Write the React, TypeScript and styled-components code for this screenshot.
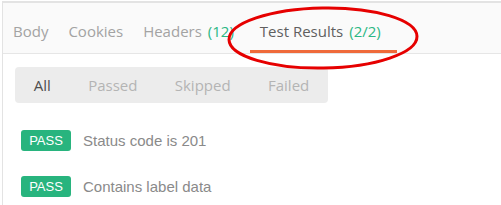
import React, { FunctionComponent } from 'react'
import styled, { createGlobalStyle } from 'styled-components'

const GlobalStyle = createGlobalStyle`
  html, body {
    margin: 0;
    padding: 0;
    background: #ffffff;
  }
  body {
    font-family: 'Open Sans', 'Liberation Sans', sans-serif;
    overflow: hidden;
  }
`

const Page = styled.div`
  position: relative;
  width: 501px;
  height: 205px;
  padding-top: 1px;
  padding-left: 2px;
  box-sizing: border-box;
`

const Panel = styled.div`
  border-top: 2px solid #e3e3e3;
  border-left: 1px solid #e3e3e3;
  height: 100%;
  box-sizing: border-box;
`

const TabBar = styled.div`
  display: flex;
  align-items: flex-end;
  height: 50px;
  background: #fafafa;
  border-bottom: 1px solid #e6e6e6;
`

const Tab = styled.div<{ $active?: boolean }>`
  display: flex;
  align-items: baseline;
  padding: 0 10px 9px;
  font-size: 15px;
  line-height: 20px;
  color: ${(p) => (p.$active ? '#5f5f5f' : '#a3a3a3')};
  border-bottom: 3px solid ${(p) => (p.$active ? '#ef6a3a' : 'transparent')};
`

const Count = styled.span`
  margin-left: 6px;
  padding-right: 6px;
  color: #2cb784;
`

const Body = styled.div`
  padding: 13px 0 0 12px;
`

const Filter = styled.div`
  display: inline-flex;
  height: 36px;
  background: #ececec;
  border-radius: 4px;
`

const FilterItem = styled.div<{ $active?: boolean }>`
  display: flex;
  align-items: center;
  padding: 0 18.7px;
  font-size: 15px;
  color: ${(p) => (p.$active ? '#4f4f4f' : '#b4b4b4')};
`

const Results = styled.div`
  margin-top: 14px;
  padding-left: 6px;
`

const Row = styled.div`
  display: flex;
  align-items: center;
  height: 46px;
`

const Badge = styled.span`
  display: inline-flex;
  align-items: center;
  justify-content: center;
  width: 50px;
  height: 21px;
  border-radius: 3px;
  background: #28b47e;
  color: #ffffff;
  font-family: 'Liberation Sans', Arial, sans-serif;
  font-size: 13px;
`

const ResultName = styled.span`
  margin-left: 12px;
  font-family: 'Liberation Sans', Arial, sans-serif;
  font-size: 15px;
  color: #8a8a8a;
`

const Annotation = styled.svg`
  position: absolute;
  left: 0;
  top: 0;
  pointer-events: none;
`

const tabs = [
  { label: 'Body' },
  { label: 'Cookies' },
  { label: 'Headers', count: '(12)' },
  { label: 'Test Results', count: '(2/2)', active: true },
]

const filters = ['All', 'Passed', 'Skipped', 'Failed']

const results = ['Status code is 201', 'Contains label data']

const App: FunctionComponent = () => {
  return (
    <Page>
      <GlobalStyle />
      <Panel>
        <TabBar>
          {tabs.map((t) => (
            <Tab key={t.label} $active={t.active}>
              {t.label}
              {t.count && <Count>{t.count}</Count>}
            </Tab>
          ))}
        </TabBar>
        <Body>
          <Filter>
            {filters.map((f, i) => (
              <FilterItem key={f} $active={i === 0}>
                {f}
              </FilterItem>
            ))}
          </Filter>
          <Results>
            {results.map((r) => (
              <Row key={r}>
                <Badge>PASS</Badge>
                <ResultName>{r}</ResultName>
              </Row>
            ))}
          </Results>
        </Body>
      </Panel>
      <Annotation width="501" height="205" viewBox="0 0 501 205">
        <ellipse
          cx="323"
          cy="38"
          rx="94"
          ry="30"
          fill="none"
          stroke="#e60000"
          strokeWidth="3"
          transform="rotate(-1 323 38)"
        />
      </Annotation>
    </Page>
  )
}

export default App
